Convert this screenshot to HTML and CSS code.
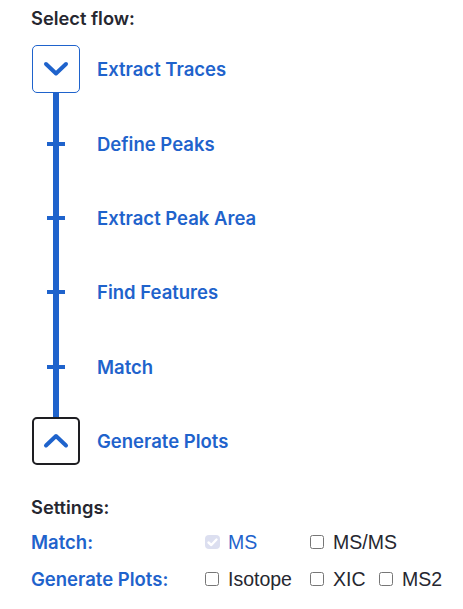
FILE: index.html
```html
<!DOCTYPE html>
<html lang="en">
<head>
  <meta charset="UTF-8">
  <title>Select flow</title>
  <link rel="stylesheet" href="styles.css">
</head>
<body>
<main class="panel">
  <div class="section-title">Select flow:</div>

  <ul class="flow">
    <li class="step first">
      <span class="step-icon">
        <button type="button" class="step-btn">
          <svg width="48" height="48" viewBox="0 0 48 48"><polyline points="14,19 24,28.5 34,19" /></svg>
        </button>
      </span>
      <span class="step-label">Extract Traces</span>
    </li>
    <li class="step">
      <span class="step-icon tick"></span>
      <span class="step-label">Define Peaks</span>
    </li>
    <li class="step">
      <span class="step-icon tick"></span>
      <span class="step-label">Extract Peak Area</span>
    </li>
    <li class="step">
      <span class="step-icon tick"></span>
      <span class="step-label">Find Features</span>
    </li>
    <li class="step">
      <span class="step-icon tick"></span>
      <span class="step-label">Match</span>
    </li>
    <li class="step last">
      <span class="step-icon">
        <button type="button" class="step-btn is-end">
          <svg width="48" height="48" viewBox="0 0 48 48"><polyline points="14,28.5 24,19 34,28.5" /></svg>
        </button>
      </span>
      <span class="step-label">Generate Plots</span>
    </li>
  </ul>

  <div class="section-title">Settings:</div>

  <div class="settings">
    <div class="setting-name">Match:</div>
    <label class="opt is-on">
      <span class="fake-check">
        <svg width="15" height="14" viewBox="0 0 15 14"><polyline points="3.5,7.5 6.3,10 11.5,4.5" /></svg>
      </span>
      MS
    </label>
    <label class="opt span-2"><input type="checkbox"> MS/MS</label>

    <div class="setting-name">Generate Plots:</div>
    <label class="opt"><input type="checkbox"> Isotope</label>
    <label class="opt"><input type="checkbox"> XIC</label>
    <label class="opt"><input type="checkbox"> MS2</label>
  </div>
</main>
</body>
</html>
```

FILE: styles.css
```css
body{
  margin: 0;
  padding: 0;
  font-family: Inter, "Noto Sans", sans-serif;
  color: #262730;
  background: #fff;
}
*{
  box-sizing: border-box;
}
.panel{
  padding: 8px 0 0 31px;
}
.section-title{
  font-size: 18.3px;
  font-weight: 600;
  line-height: 20px;
  margin-bottom: 4px;
}

/* flow steps: one rail drawn on the list, ticks on each middle step */
.flow{
  list-style: none;
  margin: 0 0 19px 0;
  padding: 0 0 0 1px;
  background: linear-gradient(#1f63cc, #1f63cc) 22px 61px / 6px calc(100% - 110px) no-repeat;
}
.step{
  display: grid;
  grid-template-columns: 48px 1fr;
  column-gap: 17px;
  align-items: center;
  height: 74.4px;
}
.step-icon{
  height: 100%;
  display: flex;
  align-items: center;
}
.step-icon.tick{
  background: linear-gradient(#1f63cc, #1f63cc) center / 18px 4px no-repeat;
}
.step-icon .step-btn{
  width: 48px;
  height: 48px;
  padding: 0;
  border: 1.5px solid #1f63cc;
  border-radius: 5px;
  background: #fff;
  display: block;
  cursor: pointer;
}
.step-btn.is-end{
  border: 2px solid #1e1e22;
}
.step-btn svg{
  display: block;
  margin: -1.5px;
}
.step-btn.is-end svg{
  margin: -2px;
}
.step-btn polyline{
  fill: none;
  stroke: #1f63cc;
  stroke-width: 4;
  stroke-linecap: round;
  stroke-linejoin: round;
}
.step-label{
  font-size: 18.5px;
  font-weight: 600;
  color: #1f63cc;
}

/* settings */
.settings{
  display: grid;
  grid-template-columns: 174px 105px 69px auto;
  row-gap: 15px;
  margin-top: 14px;
  align-items: center;
}
.setting-name{
  font-size: 18.5px;
  font-weight: 600;
  color: #1f63cc;
  line-height: 22px;
}
.opt{
  font-family: "Liberation Sans", Arial, sans-serif;
  font-size: 19.5px;
  line-height: 22px;
  color: #262730;
  display: flex;
  align-items: center;
  gap: 9px;
  white-space: nowrap;
}
.opt.is-on{
  color: #1f63cc;
  gap: 8px;
}
.opt.span-2{
  grid-column: span 2;
}
.opt input{
  margin: 0;
  width: 14px;
  height: 14px;
}
.fake-check{
  width: 15px;
  height: 14px;
  border-radius: 4px;
  background: #dcdff0;
  display: block;
}
.fake-check svg{
  display: block;
}
.fake-check polyline{
  fill: none;
  stroke: #fff;
  stroke-width: 2.4;
  stroke-linecap: round;
  stroke-linejoin: round;
}
```
